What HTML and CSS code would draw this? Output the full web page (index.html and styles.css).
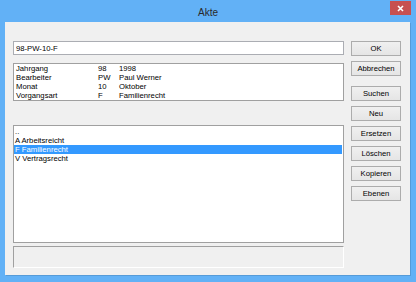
FILE: index.html
```html
<!DOCTYPE html>
<html lang="de">
<head>
  <meta charset="UTF-8">
  <title>Akte</title>
  <link rel="stylesheet" href="styles.css">
</head>
<body>

  <div class="window">
    <!-- title bar -->
    <div class="titlebar">
      <span class="title">Akte</span>
      <button class="close-btn">
        <svg width="7" height="7" viewBox="0 0 7 7">
          <path d="M1 1 L6 6 M6 1 L1 6" stroke="#fff" stroke-width="1.6" fill="none"/>
        </svg>
      </button>
    </div>

    <div class="client">
      <!-- left side -->
      <div class="main-col">
        <input type="text" class="akte-input" value="98-PW-10-F">

        <div class="info-box">
          <div class="info-row"><span>Jahrgang</span><span>98</span><span>1998</span></div>
          <div class="info-row"><span>Bearbeiter</span><span>PW</span><span>Paul Werner</span></div>
          <div class="info-row"><span>Monat</span><span>10</span><span>Oktober</span></div>
          <div class="info-row"><span>Vorgangsart</span><span>F</span><span>Familienrecht</span></div>
        </div>

        <div class="list-box">
          <div class="list-item">..</div>
          <div class="list-item">A Arbeitsreicht</div>
          <div class="list-item selected">F Familienrecht</div>
          <div class="list-item">V Vertragsrecht</div>
        </div>

        <div class="status-box"></div>
      </div>

      <!-- buttons -->
      <div class="btn-col">
        <button class="dlg-btn">OK</button>
        <button class="dlg-btn">Abbrechen</button>
        <button class="dlg-btn spaced">Suchen</button>
        <button class="dlg-btn">Neu</button>
        <button class="dlg-btn">Ersetzen</button>
        <button class="dlg-btn">Löschen</button>
        <button class="dlg-btn">Kopieren</button>
        <button class="dlg-btn">Ebenen</button>
      </div>
    </div>
  </div>

</body>
</html>
```

FILE: styles.css
```css
body {
  margin: 0;
  font-family: 'Liberation Sans', Arial, sans-serif;
  font-size: 7.7px;
  color: #000;
}

.window {
  width: 416px;
  height: 282px;
  background-color: #62b1f6;
  display: flex;
  flex-direction: column;
  box-sizing: border-box;
}

.titlebar {
  height: 22px;
  position: relative;
  display: flex;
  align-items: center;
  justify-content: center;
}

.title {
  font-size: 10px;
  color: #2a2a2a;
  margin-top: 2px;
}

.close-btn {
  position: absolute;
  top: 1px;
  right: 5px;
  width: 21px;
  height: 14px;
  padding: 0;
  border: none;
  background-color: #c75050;
  display: flex;
  align-items: center;
  justify-content: center;
}

.client {
  flex: 1;
  margin: 0 6px 7px 5px;
  padding: 19px 9px 0 8px;
  background-color: #f0f0f0;
  display: flex;
  gap: 7px;
  box-shadow: 1px 1px 0 #559bd8;
}

.main-col {
  width: 331px;
  display: flex;
  flex-direction: column;
}

.akte-input {
  height: 14px;
  box-sizing: border-box;
  border: 1px solid #abadb3;
  padding: 0 2px 0 2px;
  margin: 0;
  font-family: inherit;
  font-size: 7.7px;
  background: #fff;
  color: #000;
  outline: none;
}

.info-box {
  margin-top: 8px;
  height: 38px;
  box-sizing: border-box;
  border: 1px solid #a0a0a0;
  background: #fff;
  padding: 0 2px;
}

.info-row {
  display: grid;
  grid-template-columns: 82px 21px 1fr;
  line-height: 9px;
}

.list-box {
  margin-top: 24px;
  height: 118px;
  box-sizing: border-box;
  border: 1px solid #a0a0a0;
  background: #fff;
  padding-top: 1px;
}

.list-item {
  line-height: 9px;
  padding-left: 1px;
  margin: 0 1px 0 0;
}

.list-item.selected {
  background-color: #3399ff;
  color: #fff;
}

.status-box {
  margin-top: 3px;
  height: 22px;
  box-sizing: border-box;
  border-top: 1px solid #a0a0a0;
  border-left: 1px solid #a0a0a0;
  border-right: 1px solid #fff;
  border-bottom: 1px solid #fff;
}

.btn-col {
  width: 50px;
  display: flex;
  flex-direction: column;
  gap: 5px;
}

.dlg-btn {
  height: 15px;
  padding: 0;
  margin: 0;
  border: 1px solid #acacac;
  background: linear-gradient(#f0f0f0, #e5e5e5);
  font-family: inherit;
  font-size: 7.7px;
  color: #000;
}

.dlg-btn.spaced {
  margin-top: 5px;
}
```
